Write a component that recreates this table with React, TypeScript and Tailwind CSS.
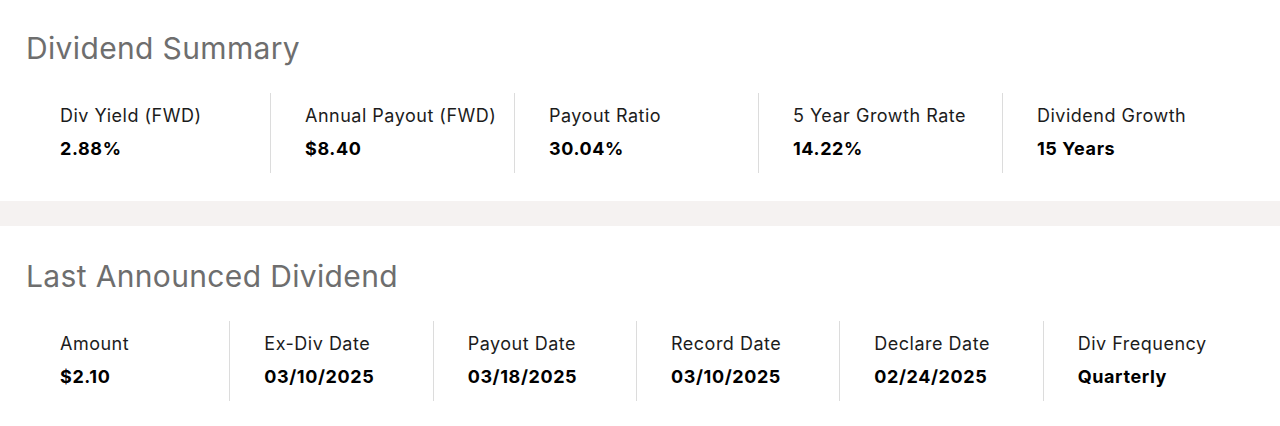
const summary = [
  { label: 'Div Yield (FWD)', value: '2.88%' },
  { label: 'Annual Payout (FWD)', value: '$8.40' },
  { label: 'Payout Ratio', value: '30.04%' },
  { label: '5 Year Growth Rate', value: '14.22%' },
  { label: 'Dividend Growth', value: '15 Years' },
]

const announced = [
  { label: 'Amount', value: '$2.10' },
  { label: 'Ex-Div Date', value: '03/10/2025' },
  { label: 'Payout Date', value: '03/18/2025' },
  { label: 'Record Date', value: '03/10/2025' },
  { label: 'Declare Date', value: '02/24/2025' },
  { label: 'Div Frequency', value: 'Quarterly' },
]

function Stat({ label, value, first }: { label: string; value: string; first: boolean }) {
  return (
    <div className={`h-[80px] pl-[34px] pt-[11px] flex flex-col gap-[9px] ${first ? '' : 'border-l border-[#dcdcdc]'}`}>
      <p className="text-[18px] leading-[24px] tracking-[0.5px] text-[#1c1c1c] whitespace-nowrap">{label}</p>
      <p className="text-[18px] leading-[24px] tracking-[0.6px] font-bold text-black whitespace-nowrap">{value}</p>
    </div>
  )
}

function Section({ title, items, cols }: { title: string; items: { label: string; value: string }[]; cols: string }) {
  return (
    <section className="bg-white pl-[26px] pr-[34px]">
      <h2 className="text-[30px] leading-[36px] tracking-[0.35px] text-[#6e6e6e] font-normal">{title}</h2>
      <div className={`grid ${cols} mt-[27px]`}>
        {items.map((it, i) => (
          <Stat key={it.label} label={it.label} value={it.value} first={i === 0} />
        ))}
      </div>
    </section>
  )
}

export default function App() {
  return (
    <div className="w-[1280px] h-[426px] bg-white overflow-hidden" style={{ fontFamily: 'Inter, "Noto Sans", sans-serif' }}>
      <div className="pt-[30px] pb-[28px]">
        <Section title="Dividend Summary" items={summary} cols="grid-cols-5" />
      </div>
      <div className="h-[25px] bg-[#f5f2f1]" />
      <div className="pt-[32px]">
        <Section title="Last Announced Dividend" items={announced} cols="grid-cols-6" />
      </div>
    </div>
  )
}
